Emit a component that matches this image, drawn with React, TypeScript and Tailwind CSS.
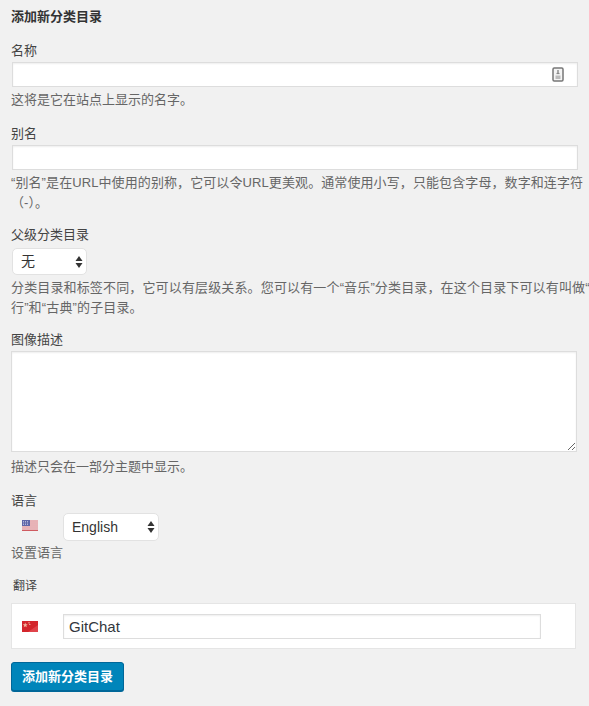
import React from 'react';

const fontStack = "font-['Liberation_Sans','Noto_Sans_CJK_SC',sans-serif]";

const SelectArrows = () => (
    <svg className="absolute right-[4px] top-1/2 -translate-y-1/2 pointer-events-none" width="8" height="13" viewBox="0 0 8 13">
        <path d="M4 0.5 L7.5 5.5 H0.5 Z" fill="#333" />
        <path d="M4 12.5 L7.5 7.5 H0.5 Z" fill="#333" />
    </svg>
);

const UsFlag = () => (
    <svg width="16" height="11" viewBox="0 0 16 11" className="block">
        <rect width="16" height="11" fill="#f3f3f6" />
        <path d="M0 1h16M0 3h16M0 5h16M0 7h16M0 9h16" stroke="#d9656a" strokeWidth="0.9" />
        <rect y="10" width="16" height="1" fill="#cf5a60" />
        <rect width="8" height="6" fill="#5f66a8" />
        <path d="M1 1.5h6M1 3h6M1 4.5h6" stroke="#d5d8ee" strokeWidth="0.7" strokeDasharray="1 1" />
    </svg>
);

const CnFlag = () => (
    <svg width="16" height="11" viewBox="0 0 16 11" className="block">
        <rect width="16" height="11" fill="#d3262c" />
        <path d="M16 4 L16 11 L6 11 Z" fill="#e0434a" />
        <path d="M3.2 1.4 L3.9 3.2 L5.7 3.3 L4.3 4.4 L4.8 6.2 L3.2 5.2 L1.7 6.2 L2.2 4.4 L0.8 3.3 L2.6 3.2 Z" fill="#f0b9a0" />
        <circle cx="7" cy="1.8" r="0.7" fill="#f0b9a0" />
        <circle cx="7.8" cy="3.4" r="0.7" fill="#f0b9a0" />
    </svg>
);

const FieldIcon = () => (
    <svg className="absolute right-[14px] top-[5px]" width="12" height="15" viewBox="0 0 12 15">
        <rect x="1" y="1" width="10" height="13" rx="1.2" fill="#f4f4f4" stroke="#777" strokeWidth="1.5" />
        <path d="M6 3v4" stroke="#888" strokeWidth="1.4" />
        <path d="M4.5 6.5h3" stroke="#888" strokeWidth="1.2" />
        <rect x="3.5" y="8.5" width="5" height="3.5" fill="#bbb" />
    </svg>
);

const inputClass = "block w-full bg-white border border-[#ddd] shadow-[inset_0_1px_2px_rgba(0,0,0,0.07)] outline-none";
const labelClass = "block text-[13px] leading-[18px] text-[#444]";
const helpClass = "text-[13px] leading-[18px] text-[#666]";

export default function App() {
    return (
        <div className={`${fontStack} w-[589px] h-[706px] overflow-hidden bg-[#f1f1f1] pl-[11px] pt-[8px]`}>
            <h3 className="text-[13px] leading-[18px] font-bold text-[#333]">添加新分类目录</h3>

            <div className="mt-[16px]">
                <label className={labelClass}>名称</label>
                <div className="relative ml-[1px] mt-[2px] w-[566px]">
                    <input className={`${inputClass} h-[25px]`} type="text" readOnly />
                    <FieldIcon />
                </div>
                <p className={`${helpClass} mt-[4px]`}>这将是它在站点上显示的名字。</p>
            </div>

            <div className="mt-[16px]">
                <label className={labelClass}>别名</label>
                <input className={`${inputClass} ml-[1px] mt-[2px] !w-[566px] h-[25px]`} type="text" readOnly />
                <p className={`${helpClass} mt-[3px] w-[592px] !leading-[19.5px] tracking-[0.095px]`}>“别名”是在URL中使用的别称，它可以令URL更美观。通常使用小写，只能包含字母，数字和连字符（-）。</p>
            </div>

            <div className="mt-[14px]">
                <label className={labelClass}>父级分类目录</label>
                <div className="relative ml-[1px] mt-[4px] w-[75px]">
                    <select className="block w-full h-[27px] appearance-none bg-white border border-[#e2e2e2] rounded-[5px] pl-[8px] text-[14px] text-[#333] outline-none">
                        <option>无</option>
                    </select>
                    <SelectArrows />
                </div>
                <p className={`${helpClass} mt-[3px] w-[592px] !leading-[19.5px] tracking-[0.145px]`}>分类目录和标签不同，它可以有层级关系。您可以有一个“音乐”分类目录，在这个目录下可以有叫做“流行”和“古典”的子目录。</p>
            </div>

            <div className="mt-[14px]">
                <label className={labelClass}>图像描述</label>
                <textarea className={`${inputClass} mt-[2px] !w-[566px] h-[101px]`} readOnly />
                <p className={`${helpClass} mt-[6px]`}>描述只会在一部分主题中显示。</p>
            </div>

            <div className="mt-[16px]">
                <label className={labelClass}>语言</label>
                <div className="flex items-center mt-[3px]">
                    <div className="ml-[11px] w-[41px] -mt-[4px]"><UsFlag /></div>
                    <div className="relative w-[96px]">
                        <select className="block w-full h-[28px] appearance-none bg-white border border-[#e2e2e2] rounded-[5px] pl-[8px] text-[14px] text-[#333] outline-none">
                            <option>English</option>
                        </select>
                        <SelectArrows />
                    </div>
                </div>
                <p className={`${helpClass} mt-[3px]`}>设置语言</p>
            </div>

            <div className="mt-[15px] ml-[2px] text-[12px] leading-[18px] text-[#444]">翻译</div>

            <div className="mt-[8px] w-[565px] h-[46px] bg-white border border-[#e5e5e5] flex items-center pl-[10px]">
                <div className="w-[41px]"><CnFlag /></div>
                <input className={`${inputClass} !w-[478px] h-[25px] px-[5px] text-[15px] text-[#32373c]`} type="text" defaultValue="GitChat" />
            </div>

            <button className="mt-[13px] block w-[113px] h-[29px] bg-[#0085ba] border border-[#006799] rounded-[3px] shadow-[0_1px_0_#006799] text-white text-[13px] font-bold">添加新分类目录</button>
        </div>
    );
}
